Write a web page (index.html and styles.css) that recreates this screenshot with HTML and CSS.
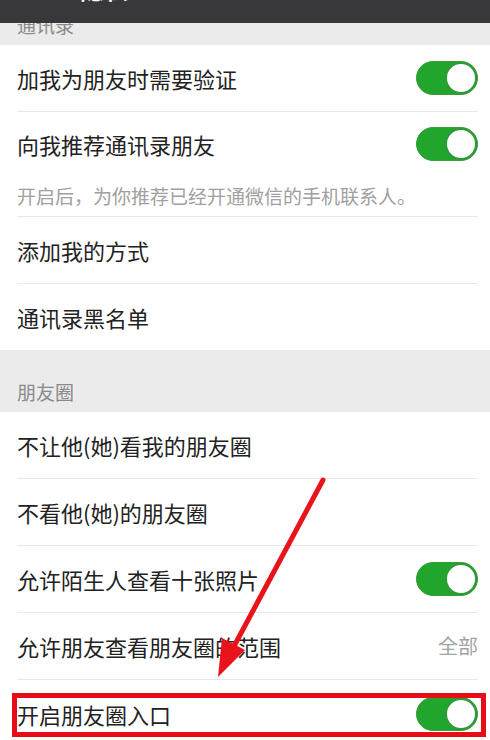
FILE: index.html
```html
<!DOCTYPE html>
<html lang="zh-CN">
<head>
<meta charset="utf-8">
<link rel="stylesheet" href="styles.css">
</head>
<body>
<div class="navbar">
  <span class="back"></span>
  <span class="title">隐私</span>
</div>
<div class="page">
  <div class="section-head sh-first"><span>通讯录</span></div>
  <div class="group">
    <div class="row"><div class="inner"><span class="label">加我为朋友时需要验证</span><span class="switch"></span></div></div>
    <div class="row tall"><div class="inner col">
      <div class="line"><span class="label">向我推荐通讯录朋友</span><span class="switch"></span></div>
      <div class="sub">开启后，为你推荐已经开通微信的手机联系人。</div>
    </div></div>
    <div class="row"><div class="inner"><span class="label">添加我的方式</span></div></div>
    <div class="row last"><div class="inner"><span class="label">通讯录黑名单</span></div></div>
  </div>
  <div class="section-head"><span>朋友圈</span></div>
  <div class="group">
    <div class="row"><div class="inner"><span class="label">不让他(她)看我的朋友圈</span></div></div>
    <div class="row"><div class="inner"><span class="label">不看他(她)的朋友圈</span></div></div>
    <div class="row"><div class="inner"><span class="label">允许陌生人查看十张照片</span><span class="switch"></span></div></div>
    <div class="row"><div class="inner"><span class="label">允许朋友查看朋友圈的范围</span><span class="value">全部</span></div></div>
    <div class="row"><div class="inner"><span class="label">开启朋友圈入口</span><span class="switch"></span></div></div>
  </div>
</div>
<div class="highlight"></div>
<svg class="arrow" width="490" height="740" viewBox="0 0 490 740">
  <line x1="323" y1="480" x2="232" y2="650" stroke="#e8131b" stroke-width="5" stroke-linecap="round"/>
  <polygon points="218,677 245,650 222,638" fill="#e8131b"/>
</svg>
</body>
</html>
```
FILE: styles.css
```css
html, body {
  margin: 0;
  padding: 0;
  width: 490px;
  height: 740px;
  overflow: hidden;
  background: #ffffff;
  font-family: "Noto Sans CJK SC", "Noto Sans", sans-serif;
}

.navbar {
  position: absolute;
  top: 0;
  left: 0;
  width: 490px;
  height: 23px;
  background: #38383b;
  overflow: hidden;
  z-index: 5;
}

.navbar .back {
  position: absolute;
  left: 22px;
  top: -6px;
  width: 2px;
  height: 6px;
  background: #bdbdbd;
  transform: rotate(-40deg);
}

.navbar .title {
  position: absolute;
  left: 80px;
  top: -24px;
  font-size: 24px;
  line-height: 26px;
  color: #ffffff;
  font-weight: bold;
}

.page {
  margin-top: -17px;
}

.section-head {
  box-sizing: border-box;
  height: 62px;
  background: #ebebeb;
  padding: 0 17px 7px;
  display: flex;
  align-items: flex-end;
  font-size: 19px;
  line-height: 26px;
  color: #8a8a8a;
}

.group {
  background: #ffffff;
}

.row {
  height: 67px;
  box-sizing: border-box;
  padding-left: 17px;
  padding-right: 12px;
}

.row .inner {
  height: 100%;
  box-sizing: border-box;
  border-bottom: 1px solid #e8e8e8;
  display: flex;
  align-items: center;
  justify-content: space-between;
}

.row.last {
  height: 66px;
}

.row.last .inner,
.group .row:last-child .inner {
  border-bottom: none;
}

.row.tall {
  height: 105px;
}

.row .inner.col {
  flex-direction: column;
  align-items: stretch;
  justify-content: flex-start;
  padding-top: 14px;
}

.line {
  height: 36px;
  display: flex;
  align-items: center;
  justify-content: space-between;
}

.label {
  font-size: 22px;
  line-height: 30px;
  color: #222222;
}

.sub {
  margin-top: 21px;
  font-size: 19px;
  line-height: 26px;
  color: #a0a0a0;
}

.value {
  font-size: 20px;
  line-height: 26px;
  color: #a3a3a3;
}

.switch {
  position: relative;
  width: 62px;
  height: 34px;
  box-sizing: border-box;
  border-radius: 17px;
  background: #22a52c;
  border: 1px solid #3a9a3c;
  flex: none;
}

.switch::after {
  content: "";
  position: absolute;
  right: 0;
  top: 0;
  width: 32px;
  height: 32px;
  box-sizing: border-box;
  border-radius: 50%;
  background: #ffffff;
  border: 2px solid #2f9a36;
}

.highlight {
  position: absolute;
  left: 12px;
  top: 693px;
  width: 474px;
  height: 44px;
  box-sizing: border-box;
  border: 5px solid #e60d16;
  z-index: 4;
}

.arrow {
  position: absolute;
  left: 0;
  top: 0;
  z-index: 4;
}
```
